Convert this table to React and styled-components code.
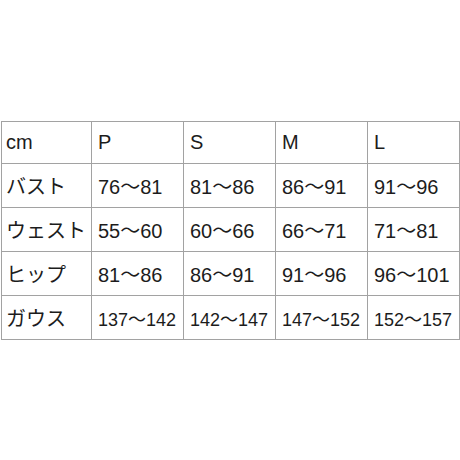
import React from "react";
import styled, { createGlobalStyle } from "styled-components";

const Global = createGlobalStyle`
  html, body { margin: 0; padding: 0; background: #ffffff; }
  body { font-family: "Liberation Sans", Arial, "Noto Sans CJK JP", sans-serif; }
`;

const Page = styled.div`
  width: 460px;
  height: 460px;
  box-sizing: border-box;
  padding: 121px 0 0 1px;
  background: #ffffff;
`;

const Grid = styled.div`
  display: grid;
  grid-template-columns: 89px 91px 91px 91px 91px;
  grid-template-rows: 41px 43px 43px 43px 43px;
  gap: 1px;
  padding: 1px;
  width: max-content;
  background: #a2a2a2;
`;

const Cell = styled.div`
  background: #ffffff;
  display: flex;
  align-items: center;
  padding-left: ${(p) => (p.$label ? "4px" : "6px")};
  font-family: "Liberation Sans", Arial, "Noto Sans CJK JP", sans-serif;
  font-size: ${(p) => (p.$small ? "18px" : "20px")};
  font-weight: 400;
  color: #1c1c1c;
  white-space: nowrap;
  overflow: hidden;
`;

const header = ["cm", "P", "S", "M", "L"];
const rows = [
  ["バスト", "76〜81", "81〜86", "86〜91", "91〜96"],
  ["ウェスト", "55〜60", "60〜66", "66〜71", "71〜81"],
  ["ヒップ", "81〜86", "86〜91", "91〜96", "96〜101"],
  ["ガウス", "137〜142", "142〜147", "147〜152", "152〜157"],
];

export default function App() {
  return (
    <Page>
      <Global />
      <Grid>
        {header.map((h, i) => (
          <Cell key={"h" + i} $label={i === 0}>
            {h}
          </Cell>
        ))}
        {rows.map((r, ri) =>
          r.map((c, ci) => (
            <Cell
              key={ri + "-" + ci}
              $label={ci === 0}
              $small={ri === 3 && ci > 0}
            >
              {c}
            </Cell>
          ))
        )}
      </Grid>
    </Page>
  );
}
